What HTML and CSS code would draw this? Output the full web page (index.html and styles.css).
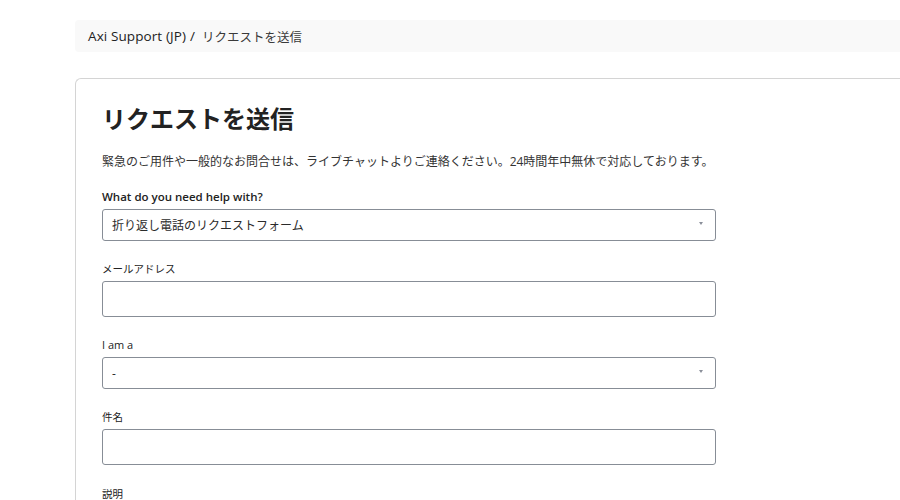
FILE: index.html
```html
<!DOCTYPE html>
<html lang="ja">
<head>
<meta charset="utf-8">
<title>リクエストを送信</title>
<link rel="stylesheet" href="styles.css">
</head>
<body>
<div class="page">
  <nav class="crumbs">
    <a class="crumb-link" href="#">Axi Support (JP)</a>
    <span class="crumb-sep">/</span>
    <span class="crumb-current">リクエストを送信</span>
  </nav>
  <section class="card">
    <h1 class="title">リクエストを送信</h1>
    <p class="intro">緊急のご用件や一般的なお問合せは、ライブチャットよりご連絡ください。24時間年中無休で対応しております。</p>
    <form class="form">
      <div class="field">
        <label class="label label-strong">What do you need help with?</label>
        <div class="select">
          <span class="select-value">折り返し電話のリクエストフォーム</span>
          <span class="caret"></span>
        </div>
      </div>
      <div class="field">
        <label class="label label-jp">メールアドレス</label>
        <div class="input"></div>
      </div>
      <div class="field">
        <label class="label">I am a</label>
        <div class="select">
          <span class="select-value">-</span>
          <span class="caret"></span>
        </div>
      </div>
      <div class="field">
        <label class="label label-jp">件名</label>
        <div class="input"></div>
      </div>
      <div class="field field-last">
        <label class="label label-jp">説明</label>
      </div>
    </form>
  </section>
</div>
</body>
</html>
```
FILE: styles.css
```css
html, body {
  margin: 0;
  padding: 0;
  background: #fff;
}
body {
  font-family: "Open Sans", "Noto Sans CJK JP", sans-serif;
  color: #2b2b2b;
  overflow: hidden;
}
.page {
  padding: 20px 0 0 75px;
}
.crumbs {
  height: 32px;
  display: flex;
  align-items: center;
  background: #f9f9f9;
  border-radius: 4px 0 0 4px;
  padding-left: 13px;
  font-size: 13.5px;
  gap: 4px;
}
.crumb-link {
  color: #222;
  text-decoration: none;
  font-weight: 500;
  letter-spacing: 0.1px;
}
.crumb-sep {
  color: #222;
  font-weight: 500;
  margin-right: 3px;
}
.crumb-current {
  color: #3a3a3a;
  font-size: 12.5px;
  font-family: "Noto Sans CJK JP", sans-serif;
}
.card {
  margin-top: 26px;
  border: 1px solid #d4d4d4;
  border-right: none;
  border-radius: 6px 0 0 0;
  padding: 23px 0 0 26px;
  height: 500px;
}
.title {
  margin: 0;
  font-family: "Noto Sans CJK JP", sans-serif;
  font-size: 24px;
  font-weight: 700;
  line-height: 31px;
  color: #222;
}
.intro {
  margin: 20px 0 0;
  font-size: 12px;
  line-height: 18px;
  color: #333;
  font-family: "Open Sans", "Noto Sans CJK JP", sans-serif;
}
.form {
  margin-top: 18px;
  width: 614px;
  display: flex;
  flex-direction: column;
  gap: 20px;
}
.field {
  display: flex;
  flex-direction: column;
  gap: 4px;
}
.field-last {
  margin-top: 1px;
}
.label {
  font-size: 11px;
  line-height: 16px;
  color: #222;
}
.label-jp {
  font-size: 10.5px;
}
.label-strong {
  font-weight: 600;
  font-size: 11.5px;
}
.select {
  height: 32px;
  box-sizing: border-box;
  border: 1px solid #878d96;
  border-radius: 3px;
  display: flex;
  align-items: center;
  justify-content: space-between;
  padding: 0 12px 0 9px;
  font-size: 12px;
  color: #2b2b2b;
}
.caret {
  width: 0;
  height: 0;
  border-left: 2px solid transparent;
  border-right: 2px solid transparent;
  border-top: 3px solid #8a8f99;
  margin-bottom: 3px;
}
.input {
  height: 36px;
  box-sizing: border-box;
  border: 1px solid #878d96;
  border-radius: 3px;
}
```
